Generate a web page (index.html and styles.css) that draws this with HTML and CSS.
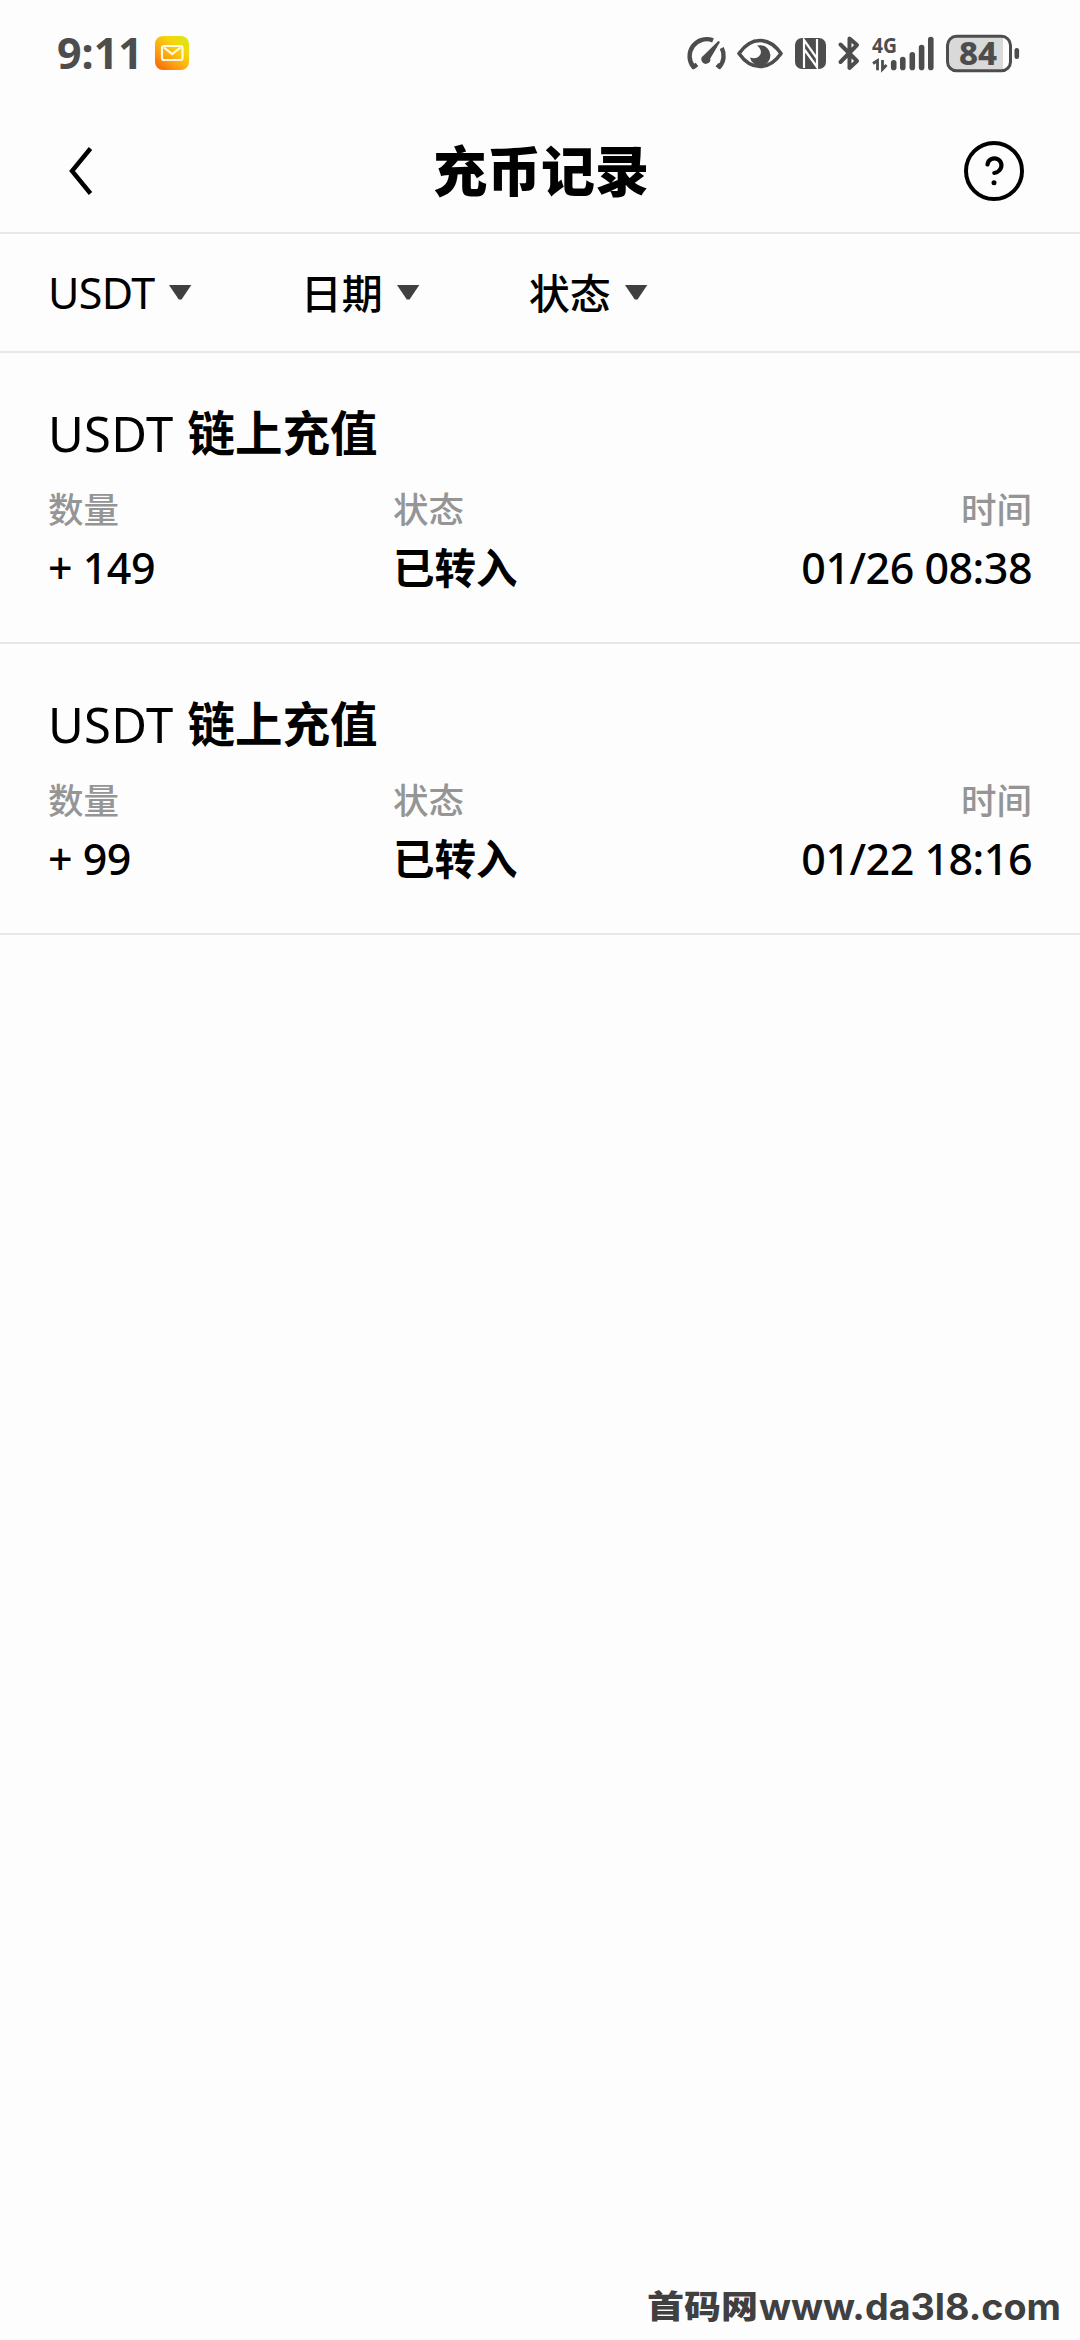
FILE: index.html
```html
<!DOCTYPE html>
<html lang="zh-CN">
<head>
<meta charset="utf-8">
<title>充币记录</title>
<link rel="stylesheet" href="styles.css">
</head>
<body>
<div class="screen">
  <div class="status-bar">
    <span class="clock">9:11</span>
    <svg class="mail" viewBox="0 0 34 34">
      <defs><linearGradient id="mailFill" x1="1" y1="0" x2="0.15" y2="1"><stop offset="0" stop-color="#d3ee12"/><stop offset="0.35" stop-color="#f6d40c"/><stop offset="0.7" stop-color="#ffa012"/><stop offset="1" stop-color="#f76a08"/></linearGradient></defs>
      <rect width="34" height="34" rx="8" fill="url(#mailFill)"/>
      <rect x="7" y="10" width="20.5" height="14" rx="2" fill="none" stroke="#fffbe0" stroke-width="2.2"/>
      <path d="M9 11.500L17.200 18L25.500 11.500" fill="none" stroke="#fffbe0" stroke-width="2.2"/>
    </svg>
    <svg class="system" viewBox="680 30 342 46">
      <g fill="none" stroke="#4d4d4d" stroke-linecap="round" stroke-linejoin="round">
        <path d="M712 40.400A17 17 0 0 0 692.500 67L696 64.500" stroke-width="4.400" stroke-linecap="butt"/>
        <path d="M720.800 48A17 17 0 0 1 718.500 66.800L716 64.600" stroke-width="4.400" stroke-linecap="butt"/>
        <path d="M738 53.500Q747 40.500 759 40.500Q771 40.500 780 53.500Q771 66.500 759 66.500Q747 66.500 738 53.500Z" stroke-width="3.600"/>
        <path d="M839.500 44.500L856 61L848.500 68V38.500L856 45L839.500 62" stroke-width="4"/>
      </g>
      <g fill="#4d4d4d">
        <path d="M717.300 41L719 42L709.300 58.500A4.500 4.500 0 1 1 702.500 55.500Z"/>
        <path d="M759.500 45.200A10.300 10.300 0 1 1 749 57.500Q756 60 759.300 54.500Q761.500 50 756 45.600Z"/>
        <rect x="794" y="38" width="31" height="31" rx="7"/>
      </g>
      <path d="M803 68V40L816 58.500V45.500M803 49L816 67V39" fill="none" stroke="#fdfdfd" stroke-width="2.200"/>
      <text class="network" x="871" y="53.300" textLength="25" lengthAdjust="spacingAndGlyphs">4G</text>
      <path d="M872 63.500L876.500 60.500V70.300M881.500 60V69.300L885.500 65" fill="none" stroke="#4d4d4d" stroke-width="2.800"/>
      <path d="M892.700 62.800V67.400M901.800 59.600V67.400M911.300 54.800V67.400M920.600 47.500V67.400M929.800 39.500V67.400" stroke="#4d4d4d" stroke-width="5.600" stroke-linecap="round"/>
      <rect x="946.500" y="36.300" width="63" height="34.500" rx="9" fill="#fdfdfd"/>
      <path d="M1002 36.500H956Q946.500 36.500 946.500 46V61Q946.500 70.500 956 70.500H1002Z" fill="#d9d9d9"/>
      <rect x="946.500" y="36.300" width="63" height="34.500" rx="9" fill="none" stroke="#4d4d4d" stroke-width="3"/>
      <rect x="1013.500" y="48" width="4.600" height="11" rx="2.200" fill="#4d4d4d"/>
      <text class="charge" x="958" y="65" textLength="38" lengthAdjust="spacingAndGlyphs">84</text>
    </svg>
  </div>
  <header class="header">
    <svg class="back" viewBox="0 0 26 48"><path d="M22.500 1.500L4 24L22.500 46.500" fill="none" stroke="#000" stroke-width="4.400"/></svg>
    <h1 class="title">充币记录</h1>
    <svg class="help" viewBox="0 0 60 60">
      <circle cx="30" cy="30" r="28" fill="none" stroke="#000" stroke-width="4"/>
      <path d="M23.500 23.500A7 7 0 1 1 35.200 29.500Q33.500 31.500 30.300 32" fill="none" stroke="#000" stroke-width="4.200" stroke-linecap="round"/>
      <circle cx="30" cy="41.800" r="2.500"/>
    </svg>
  </header>
  <nav class="filters">
    <div class="filter"><span class="coin">USDT</span><i class="caret"></i></div>
    <div class="filter"><span class="choice">日期</span><i class="caret"></i></div>
    <div class="filter"><span class="choice">状态</span><i class="caret"></i></div>
  </nav>
  <main>
    <section class="record">
      <h2 class="name"><span class="asset">USDT</span><span class="kind">链上充值</span></h2>
      <div class="labels"><span>数量</span><span>状态</span><span>时间</span></div>
      <div class="values"><span class="amount">+ 149</span><span class="state">已转入</span><span class="time">01/26 08:38</span></div>
    </section>
    <section class="record">
      <h2 class="name"><span class="asset">USDT</span><span class="kind">链上充值</span></h2>
      <div class="labels"><span>数量</span><span>状态</span><span>时间</span></div>
      <div class="values"><span class="amount">+ 99</span><span class="state">已转入</span><span class="time">01/22 18:16</span></div>
    </section>
  </main>
  <footer class="site">
    <svg class="site-mark" viewBox="0 0 420 60">
      <text class="site-name" transform="translate(2 46) scale(1 .87)" x="0" y="0" textLength="111">首码网</text>
      <text class="site-url" x="114" y="47.500" textLength="302" lengthAdjust="spacingAndGlyphs">www.da3l8.com</text>
    </svg>
  </footer>
</div>
</body>
</html>
```
FILE: styles.css
```css
* { box-sizing: border-box; margin: 0; padding: 0; }
body {
  background: #fdfdfd;
  color: #000;
  font-family: "Noto Sans", "Noto Sans CJK SC", sans-serif;
}
.screen { display: flex; flex-direction: column; width: 1080px; height: 2340px; }
svg { display: block; flex: none; overflow: visible; }

.status-bar { display: flex; align-items: center; height: 76px; padding: 30px 57px 0 57px; }
.clock { width: 98px; font: 700 43px/46px "Noto Sans", sans-serif; color: #4d4d4d; }
.mail { width: 34px; height: 34px; }
.system { width: 342px; height: 46px; margin-left: auto; }
.network { font: 700 22px "Noto Sans", sans-serif; fill: #4d4d4d; }
.charge { font: 800 32px "Noto Sans", sans-serif; fill: #4d4d4d; }

.header {
  display: flex; align-items: center; justify-content: space-between;
  height: 158px; padding: 34px 56px 0 68px;
  border-bottom: 2px solid #e8e8e8;
}
.back { width: 26px; height: 48px; margin-right: 24px; }
.title { padding-bottom: 6px; font: 900 54px/75px "Noto Sans CJK SC", sans-serif; }
.help { width: 60px; height: 60px; }

.filters { display: flex; height: 119px; padding-left: 48px; border-bottom: 2px solid #e8e8e8; }
.filter { display: flex; align-items: center; gap: 14px; margin-right: 109px; }
.coin { font: 400 43px/60px "Noto Sans", sans-serif; letter-spacing: -0.6px; }
.choice { padding-bottom: 4px; font: 500 41px/60px "Noto Sans CJK SC", sans-serif; }
.caret { width: 23px; height: 16px; background: #404040; clip-path: polygon(0 0, 100% 0, 56% 94%, 44% 94%); }

.record { height: 291px; padding: 52px 48px 0; border-bottom: 2px solid #e8e8e8; }
.name { display: flex; align-items: center; gap: 14px; height: 56px; }
.asset { font: 400 49px/56px "Noto Sans", sans-serif; letter-spacing: 0.3px; }
.kind { padding-bottom: 4px; font: 700 47.5px/56px "Noto Sans CJK SC", sans-serif; }
.labels, .values { display: grid; grid-template-columns: 345px 1fr auto; align-items: start; }
.labels { margin-top: 27px; font: 500 35.5px/40px "Noto Sans CJK SC", sans-serif; color: #959595; }
.values { margin-top: 16px; font: 500 43px/48px "Noto Sans", sans-serif; letter-spacing: -0.5px; }
.state { padding-top: 1px; font: 700 41.5px/43px "Noto Sans CJK SC", sans-serif; letter-spacing: 0; }

.site { display: flex; justify-content: flex-end; margin-top: auto; padding-right: 15px; padding-bottom: 8px; }
.site-mark { width: 420px; height: 60px; fill: #404040; }
.site-name { font: 900 37px "Noto Sans CJK SC", sans-serif; }
.site-url { font: 700 37px "Inter", sans-serif; }
```
